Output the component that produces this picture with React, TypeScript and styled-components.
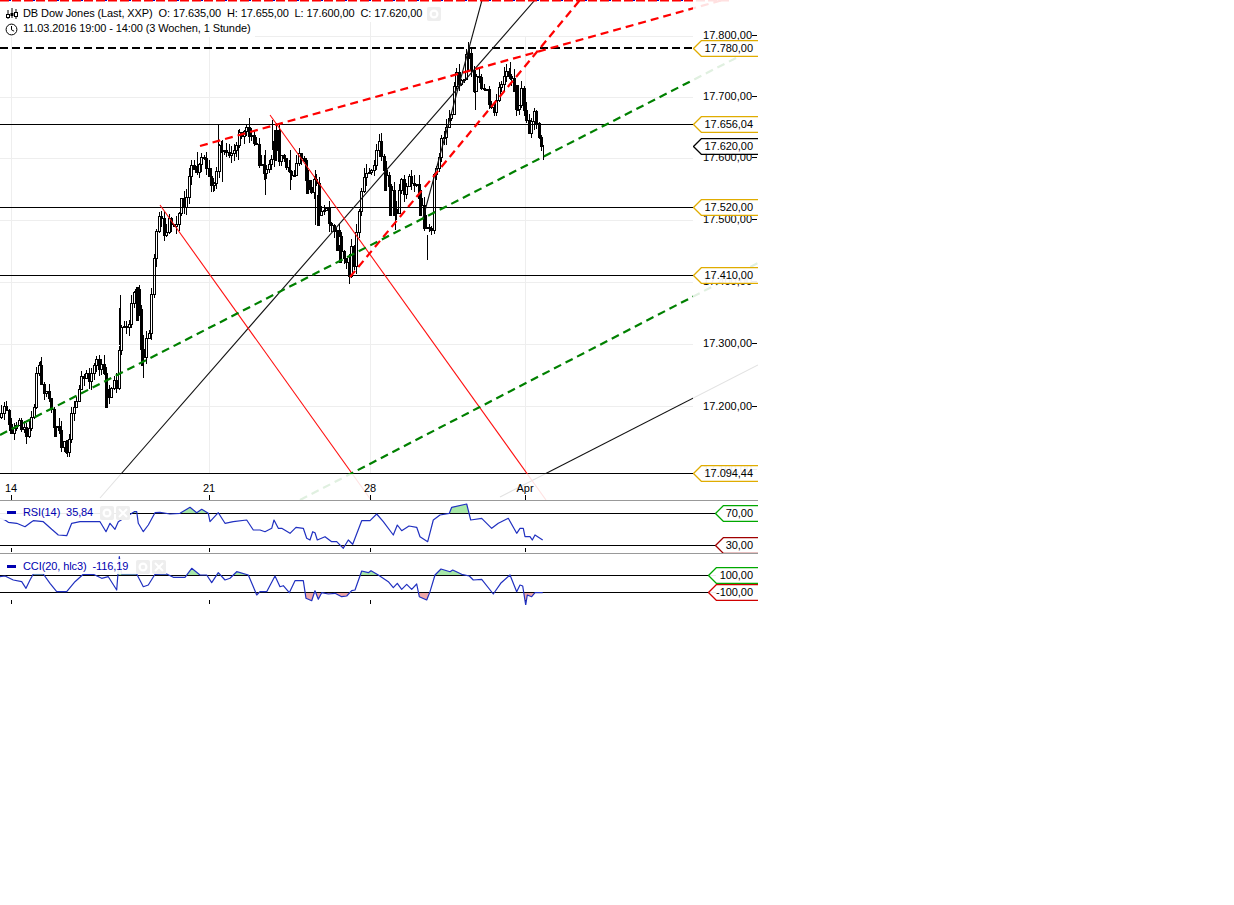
import React from 'react';
import styled, { createGlobalStyle } from 'styled-components';

const GlobalStyle = createGlobalStyle`
    html, body {
        margin: 0;
        padding: 0;
        background: #ffffff;
    }
    body {
        font-family: "Liberation Sans", Arial, sans-serif;
        font-size: 11px;
        color: #000000;
    }
`;

const COLORS = {
    gold: '#e0ac00',
    black: '#000000',
    green: '#00a800',
    maroon: '#a00000',
    red: '#d00000',
};

const ChartWindow = styled.div`
    width: 758px;
    display: flex;
    flex-direction: column;
`;

const Panel = styled.section<{ $height: number; $divider?: boolean }>`
    position: relative;
    box-sizing: border-box;
    height: ${({ $height }) => $height}px;
    overflow: hidden;
    border-bottom: ${({ $divider }) => ($divider ? '1px solid #999999' : 'none')};
`;

const Drawing = styled.svg`
    position: absolute;
    left: 0;
    top: 0;
    display: block;
`;

const AxisVeil = styled.div`
    position: absolute;
    left: 693px;
    right: 0;
    top: 0;
    bottom: 0;
    background: rgba(255, 255, 255, 0.88);
`;

const TimeVeil = styled.div`
    position: absolute;
    left: 0;
    right: 0;
    top: 474px;
    bottom: 0;
    background: rgba(255, 255, 255, 0.88);
`;

const LegendRow = styled.div<{ $top: number; $width: number; $height?: number; $color?: string }>`
    position: absolute;
    left: 0;
    top: ${({ $top }) => $top}px;
    width: ${({ $width }) => $width}px;
    height: ${({ $height }) => $height ?? 15}px;
    display: flex;
    align-items: center;
    background: rgba(255, 255, 255, 0.92);
    color: ${({ $color }) => $color ?? '#000000'};
    white-space: pre;
    line-height: 14px;
`;

const LegendText = styled.span`
    position: relative;
    top: -1px;
    letter-spacing: -0.1px;
`;

const LegendIcon = styled.span`
    width: 13px;
    margin-left: 5px;
    margin-right: 5px;
    display: flex;
    justify-content: center;
`;

const GhostButton = styled.span`
    width: 14px;
    height: 14px;
    margin-left: 2px;
    border-radius: 2px;
    background: #eeeeee;
    display: flex;
    align-items: center;
    justify-content: center;
`;

const LegendSpacer = styled.span`
    flex: 1;
`;

const AxisLabel = styled.div<{ $y: number }>`
    position: absolute;
    right: 1px;
    top: ${({ $y }) => $y - 7}px;
    height: 14px;
    line-height: 14px;
    display: flex;
    align-items: center;

    &::after {
        content: '';
        width: 5px;
        height: 1px;
        background: #000000;
    }
`;

const TimeLabel = styled.div<{ $x: number }>`
    position: absolute;
    left: ${({ $x }) => $x}px;
    top: 481px;
    width: 30px;
    margin-left: -15px;
    text-align: center;
    line-height: 14px;
`;

const TagBox = styled.div<{ $y: number; $x: number }>`
    position: absolute;
    left: ${({ $x }) => $x}px;
    right: 0;
    top: ${({ $y }) => $y - 8}px;
    height: 17px;
    line-height: 17px;
    text-align: right;
    padding-right: 5px;
    letter-spacing: -0.05px;

    & > svg {
        position: absolute;
        left: 0;
        top: 0;
    }
    & > span {
        position: relative;
    }
`;

interface PriceTagProps {
    y: number;
    x: number;
    color: string;
    text: string;
}

const PriceTag: React.FC<PriceTagProps> = ({ y, x, color, text }) => {
    const w = 758 - x;
    return (
        <TagBox $x={x} $y={y}>
            <svg width={w} height={17}>
                <path
                    d={`M${w} .5H8.5L.5 8.5L8.5 16.5H${w}`}
                    fill="rgba(255,255,255,0.92)"
                    stroke={color}
                    strokeWidth={1.3}
                />
            </svg>
            <span>{text}</span>
        </TagBox>
    );
};

// screen points read off the chart, the candles wobble around this
const PRICE_PATH: [number, number][] = [
    [0, 417], [4, 403], [7, 423], [12, 430], [17, 420], [23, 433], [28, 435], [33, 410], [35, 380], [39, 370],
    [42, 387], [47, 392], [52, 415], [57, 433], [62, 443], [68, 447], [72, 403], [78, 392], [82, 377], [90, 375],
    [98, 363], [103, 373], [107, 403], [112, 378], [117, 388], [119, 340], [122, 323], [127, 327], [130, 308],
    [135, 287], [138, 300], [142, 370], [147, 337], [150, 320], [152, 273], [155, 243], [157, 220], [159, 207],
    [163, 233], [170, 223], [173, 230], [177, 218], [180, 203], [185, 203], [188, 173], [192, 165], [197, 170],
    [200, 155], [207, 175], [213, 183], [217, 170], [219, 133], [222, 153], [233, 147], [240, 130], [248, 133],
    [255, 147], [260, 163], [265, 172], [270, 160], [274, 130], [277, 133], [278, 157], [283, 158], [288, 163],
    [292, 173], [297, 157], [303, 155], [307, 187], [310, 193], [315, 177], [318, 213], [323, 202], [328, 218],
    [332, 228], [338, 240], [342, 253], [345, 267], [349, 273], [351, 245], [353, 265], [357, 227], [362, 185],
    [370, 163], [373, 170], [377, 143], [379, 143], [382, 163], [385, 170], [390, 185], [393, 213], [395, 223],
    [399, 178], [403, 178], [404, 200], [408, 180], [417, 182], [420, 207], [423, 220], [427, 233], [431, 232],
    [434, 160], [438, 163], [442, 133], [450, 122], [452, 117], [453, 80], [463, 75], [468, 50], [470, 70],
    [473, 87], [478, 77], [485, 93], [493, 110], [500, 80], [507, 67], [512, 87], [517, 107], [520, 93], [522, 87],
    [525, 123], [530, 133], [533, 115], [537, 130], [540, 137], [543, 147],
];

const EXTRA_WICKS: [number, number, number][] = [
    [40, 361, 382], [67, 440, 457], [143, 348, 378], [218, 125, 150], [427, 235, 260],
    [468, 42, 72], [543, 145, 160], [510, 62, 80], [120, 295, 340], [272, 120, 150],
    [197, 152, 175], [213, 178, 192], [475, 70, 110], [119, 308, 345], [222, 140, 182],
    [238, 130, 160], [265, 150, 195], [290, 150, 190], [315, 170, 225], [395, 205, 230],
];

// runs of falling candles that merge into solid black
const BLACK_RUNS: [number, number, number][] = [
    [137, 287, 320], [142, 335, 365], [55, 428, 436], [106, 385, 407], [307, 170, 193],
    [318, 195, 225], [337, 230, 250], [340, 245, 262], [385, 170, 190], [390, 185, 215],
    [394, 200, 215], [420, 190, 215], [425, 215, 228], [275, 130, 160], [277, 130, 150], [517, 85, 110],
];

const priceAt = (x: number) => {
    for (let i = 1; i < PRICE_PATH.length; i++) {
        const [x1, y1] = PRICE_PATH[i];
        if (x <= x1) {
            const [x0, y0] = PRICE_PATH[i - 1];
            return y0 + ((y1 - y0) * (x - x0)) / (x1 - x0 || 1);
        }
    }
    return PRICE_PATH[PRICE_PATH.length - 1][1];
};

interface Candle {
    x: number;
    top: number;
    bottom: number;
    high: number;
    low: number;
    up: boolean;
}

const makeCandles = (): Candle[] => {
    let seed = 20160404;
    const rand = () => {
        seed = (seed * 1664525 + 1013904223) % 4294967296;
        return seed / 4294967296;
    };
    const candles: Candle[] = [];
    let open = priceAt(0);
    for (let x = 1; x <= 543; x += 2.5) {
        const close = priceAt(x) + (rand() - 0.5) * 14;
        const top = Math.min(open, close);
        const bottom = Math.max(open, close);
        candles.push({
            x: Math.round(x),
            top: Math.round(top),
            bottom: Math.round(bottom),
            high: Math.round(top - rand() * 9),
            low: Math.round(bottom + rand() * 9),
            up: close < open,
        });
        open = close;
    }
    return candles;
};

const CANDLES = makeCandles();

const Candles: React.FC = () => (
    <g shapeRendering="crispEdges" stroke="#000000" strokeWidth={1}>
        {CANDLES.map((c) => (
            <g key={c.x}>
                <line x1={c.x + 0.5} x2={c.x + 0.5} y1={c.high} y2={c.low} />
                <rect
                    x={c.x - 0.5}
                    y={c.top + 0.5}
                    width={2}
                    height={Math.max(c.bottom - c.top, 1)}
                    fill={c.up ? '#ffffff' : '#000000'}
                />
            </g>
        ))}
        {EXTRA_WICKS.map(([x, y1, y2]) => (
            <line key={`${x}-${y1}`} x1={x + 0.5} x2={x + 0.5} y1={y1} y2={y2} />
        ))}
        {BLACK_RUNS.map(([x, y1, y2]) => (
            <rect key={`${x}-${y1}`} x={x - 0.5} y={y1 + 0.5} width={2} height={y2 - y1} fill="#000000" />
        ))}
    </g>
);

const GRID_X = [11, 209, 370, 525];
const GRID_Y = [36, 97, 158, 220, 282, 344, 406];
const SOLID_LEVELS = [124, 207, 275, 473];

const MainChart: React.FC = () => (
    <Drawing width={758} height={500} viewBox="0 0 758 500">
        <g stroke="#eeeeee" shapeRendering="crispEdges">
            {GRID_X.map((x) => (
                <line key={x} x1={x + 0.5} x2={x + 0.5} y1={x === 370 ? 22 : 37} y2={473} />
            ))}
            {GRID_Y.map((y) => (
                <line key={y} x1={0} x2={693} y1={y + 0.5} y2={y + 0.5} />
            ))}
        </g>
        <Candles />
        <g stroke="#000000" shapeRendering="crispEdges">
            {SOLID_LEVELS.map((y) => (
                <line key={y} x1={0} x2={693} y1={y + 0.5} y2={y + 0.5} />
            ))}
        </g>
        <line x1={0} x2={693} y1={48} y2={48} stroke="#000000" strokeWidth={2} strokeDasharray="8 4" />
        <g fill="none" stroke="#111111" strokeWidth={1.1}>
            <line x1={100} y1={498} x2={535} y2={0} />
            <line x1={423} y1={218} x2={482} y2={0} />
            <line x1={500} y1={497} x2={758} y2={365} />
        </g>
        <g fill="none" stroke="#ff1010" strokeWidth={1.1}>
            <line x1={160} y1={205} x2={371} y2={500} />
            <line x1={270} y1={115} x2={546} y2={500} />
        </g>
        <g fill="none" stroke="#ff0000" strokeWidth={2.2} strokeDasharray="8 5">
            <line x1={200} y1={146} x2={730} y2={-2} />
            <line x1={350} y1={277} x2={580} y2={0} />
        </g>
        <g fill="none" stroke="#008000" strokeWidth={2.2} strokeDasharray="8 5">
            <line x1={0} y1={435} x2={738} y2={57} />
            <line x1={300} y1={500} x2={758} y2={263} />
        </g>
        <line x1={0} x2={693} y1={0.5} y2={0.5} stroke="#0000c0" strokeDasharray="3 5" />
        <line x1={0} x2={730} y1={0.5} y2={0.5} stroke="#ff0000" strokeWidth={2} strokeDasharray="9 3" />
    </Drawing>
);

const pts = (list: [number, number][], x0: number, y0: number) =>
    list.map(([x, y]) => [x0 + x / 3, y0 + y / 3] as [number, number]);

const RSI_LINE: [number, number][] = [
    ...pts(
        [[0, 85], [15, 90], [25, 97], [50, 100], [75, 110], [95, 95], [100, 92], [130, 95], [155, 118], [175, 135],
            [200, 137], [215, 100], [240, 95], [300, 95], [318, 125], [330, 100], [345, 118], [355, 95], [403, 65],
            [410, 65], [415, 100], [430, 125], [445, 105], [465, 68], [480, 67], [510, 72], [540, 70], [570, 52],
            [590, 68], [605, 58], [625, 70], [630, 95], [655, 68], [675, 100], [700, 95], [740, 90], [760, 120]],
        0, 490,
    ),
    ...pts(
        [[0, 120], [15, 125], [35, 115], [42, 90], [55, 115], [65, 115], [90, 130], [108, 112], [130, 115], [140, 145],
            [150, 150], [158, 125], [165, 128], [172, 150], [195, 140], [215, 155], [230, 155], [250, 175], [265, 150],
            [278, 163], [305, 92], [330, 92], [350, 72], [370, 95], [400, 135], [412, 105], [425, 122], [447, 108],
            [470, 112], [480, 140], [503, 155], [520, 90], [540, 75], [568, 70], [575, 52], [620, 42], [632, 90],
            [665, 85], [695, 115], [715, 100], [745, 85], [770, 130]],
        260, 490,
    ),
    ...pts([[0, 205], [10, 205], [15, 230], [30, 230], [37, 240], [45, 225], [68, 240]], 520, 460),
];

const CCI_LINE: [number, number][] = [
    ...pts(
        [[0, 260], [15, 258], [40, 270], [65, 275], [78, 295], [90, 270], [100, 252], [130, 252], [150, 280],
            [170, 305], [200, 305], [225, 275], [250, 253], [280, 253], [305, 265], [325, 260], [350, 300], [358, 200],
            [365, 252], [410, 252], [430, 290], [445, 285], [465, 253], [500, 252], [520, 262], [555, 262], [575, 235],
            [600, 255], [620, 255], [635, 278], [655, 248], [675, 270], [690, 265], [710, 245], [745, 255], [760, 290],
            [770, 315]],
        0, 490,
    ),
    ...pts(
        [[0, 305], [20, 305], [45, 258], [60, 290], [70, 287], [88, 308], [105, 272], [130, 272], [138, 325],
            [155, 332], [165, 302], [175, 328], [185, 308], [205, 312], [225, 310], [245, 320], [260, 318], [275, 302],
            [285, 300], [305, 243], [325, 248], [333, 242], [355, 255], [385, 275], [400, 293], [412, 280], [425, 298],
            [440, 283], [455, 298], [470, 282], [478, 320], [500, 330], [510, 305], [525, 255], [543, 237], [570, 245],
            [578, 240], [605, 253], [628, 258], [640, 270], [665, 268], [700, 312], [722, 280], [750, 255], [770, 305]],
        260, 490,
    ),
    ...pts([[0, 375], [8, 378], [17, 435], [22, 405], [35, 410], [45, 398], [68, 398]], 520, 460),
];

interface IndicatorChartProps {
    id: string;
    top: number;
    height: number;
    upper: number;
    lower: number;
    line: [number, number][];
}

const IndicatorChart: React.FC<IndicatorChartProps> = ({ id, top, height, upper, lower, line }) => {
    const d = line.map(([x, y]) => `${x.toFixed(1)},${y.toFixed(1)}`).join(' ');
    const first = line[0][0];
    const last = line[line.length - 1][0];
    return (
        <Drawing width={758} height={height} viewBox={`0 ${top} 758 ${height}`}>
            <defs>
                <clipPath id={`${id}-over`}>
                    <rect x={0} y={top} width={758} height={upper - top} />
                </clipPath>
                <clipPath id={`${id}-under`}>
                    <rect x={0} y={lower} width={758} height={top + height - lower} />
                </clipPath>
            </defs>
            <polygon
                points={`${first},${upper} ${d} ${last},${upper}`}
                fill="#a8e8a8"
                clipPath={`url(#${id}-over)`}
            />
            <polygon
                points={`${first},${lower} ${d} ${last},${lower}`}
                fill="#f0a8a8"
                clipPath={`url(#${id}-under)`}
            />
            <g stroke="#000000" shapeRendering="crispEdges">
                <line x1={0} x2={716} y1={upper + 0.5} y2={upper + 0.5} />
                <line x1={0} x2={716} y1={lower + 0.5} y2={lower + 0.5} />
                {GRID_X.map((x) => (
                    <line key={x} x1={x + 0.5} x2={x + 0.5} y1={top + height - 5} y2={top + height - 1} />
                ))}
            </g>
            <polyline points={d} fill="none" stroke="#2030c0" strokeWidth={1.2} strokeLinejoin="round" />
        </Drawing>
    );
};

const CandleGlyph = () => (
    <svg width={12} height={12} viewBox="0 0 12 12" fill="none" stroke="#000000">
        <path d="M2 2v9M6 0v10M10 1v10" />
        <rect x={0.5} y={6.5} width={3} height={3} fill="#ffffff" />
        <rect x={5} y={5.5} width={2} height={2} fill="#000000" />
        <rect x={8.5} y={4.5} width={3} height={4} fill="#ffffff" />
    </svg>
);

const ClockGlyph = () => (
    <svg width={13} height={13} viewBox="0 0 13 13" fill="none" stroke="#000000">
        <circle cx={6.5} cy={6.5} r={5.4} />
        <path d="M6.5 3v3.8l2.6 1.4" />
    </svg>
);

const DashGlyph = () => (
    <svg width={9} height={3}>
        <rect width={9} height={3} fill="#0000b0" />
    </svg>
);

const GearGlyph = () => (
    <svg width={10} height={10} viewBox="0 0 10 10">
        <circle cx={5} cy={5} r={3.4} fill="none" stroke="#ffffff" strokeWidth={2.2} />
    </svg>
);

const CrossGlyph = () => (
    <svg width={10} height={10} viewBox="0 0 10 10">
        <path d="M1 1l8 8M9 1l-8 8" stroke="#ffffff" strokeWidth={2} />
    </svg>
);

const AXIS_LABELS: [number, string][] = [
    [35, '17.800,00'], [96, '17.700,00'], [157, '17.600,00'], [219, '17.500,00'],
    [281, '17.400,00'], [343, '17.300,00'], [406, '17.200,00'], [469, '17.100,00'],
];

const PRICE_TAGS: [number, string, string][] = [
    [48, COLORS.gold, '17.780,00'],
    [124, COLORS.gold, '17.656,04'],
    [146, COLORS.black, '17.620,00'],
    [207, COLORS.gold, '17.520,00'],
    [275, COLORS.gold, '17.410,00'],
    [473, COLORS.gold, '17.094,44'],
];

const TIME_LABELS: [number, string][] = [[11, '14'], [209, '21'], [370, '28'], [525, 'Apr']];

const App: React.FC = () => (
    <>
        <GlobalStyle />
        <ChartWindow>
            <Panel $height={501} $divider>
                <MainChart />
                <AxisVeil />
                <TimeVeil />
                {TIME_LABELS.map(([x, text]) => (
                    <TimeLabel key={text} $x={x}>
                        {text}
                    </TimeLabel>
                ))}
                <Drawing width={758} height={500} viewBox="0 0 758 500">
                    <g stroke="#000000" shapeRendering="crispEdges">
                        {GRID_X.map((x) => (
                            <line key={x} x1={x + 0.5} x2={x + 0.5} y1={495} y2={500} />
                        ))}
                    </g>
                </Drawing>
                <LegendRow $top={6} $width={441}>
                    <LegendIcon>
                        <CandleGlyph />
                    </LegendIcon>
                    <LegendText>
                        {'DB Dow Jones (Last, XXP)  O: 17.635,00  H: 17.655,00  L: 17.600,00  C: 17.620,00'}
                    </LegendText>
                    <LegendSpacer />
                    <GhostButton>
                        <GearGlyph />
                    </GhostButton>
                </LegendRow>
                <LegendRow $top={21} $width={255} $height={16}>
                    <LegendIcon>
                        <ClockGlyph />
                    </LegendIcon>
                    <LegendText>11.03.2016 19:00 - 14:00 (3 Wochen, 1 Stunde)</LegendText>
                </LegendRow>
                {AXIS_LABELS.map(([y, text]) => (
                    <AxisLabel key={text} $y={y}>
                        {text}
                    </AxisLabel>
                ))}
                {PRICE_TAGS.map(([y, color, text]) => (
                    <PriceTag key={text} x={693} y={y} color={color} text={text} />
                ))}
            </Panel>
            <Panel $height={53} $divider>
                <IndicatorChart id="rsi" top={501} height={52} upper={513} lower={545} line={RSI_LINE} />
                <LegendRow $top={4} $width={130} $color="#0000b0">
                    <LegendIcon>
                        <DashGlyph />
                    </LegendIcon>
                    <LegendText>{'RSI(14)  35,84'}</LegendText>
                    <LegendSpacer />
                    <GhostButton>
                        <GearGlyph />
                    </GhostButton>
                    <GhostButton>
                        <CrossGlyph />
                    </GhostButton>
                </LegendRow>
                <PriceTag x={715} y={12} color={COLORS.green} text="70,00" />
                <PriceTag x={715} y={44} color={COLORS.maroon} text="30,00" />
            </Panel>
            <Panel $height={51}>
                <IndicatorChart id="cci" top={554} height={51} upper={575} lower={592} line={CCI_LINE} />
                <LegendRow $top={5} $width={166} $color="#0000b0">
                    <LegendIcon>
                        <DashGlyph />
                    </LegendIcon>
                    <LegendText>{'CCI(20, hlc3)  -116,19'}</LegendText>
                    <LegendSpacer />
                    <GhostButton>
                        <GearGlyph />
                    </GhostButton>
                    <GhostButton>
                        <CrossGlyph />
                    </GhostButton>
                </LegendRow>
                <PriceTag x={708} y={21} color={COLORS.green} text="100,00" />
                <PriceTag x={708} y={38} color={COLORS.red} text="-100,00" />
            </Panel>
        </ChartWindow>
    </>
);

export default App;
